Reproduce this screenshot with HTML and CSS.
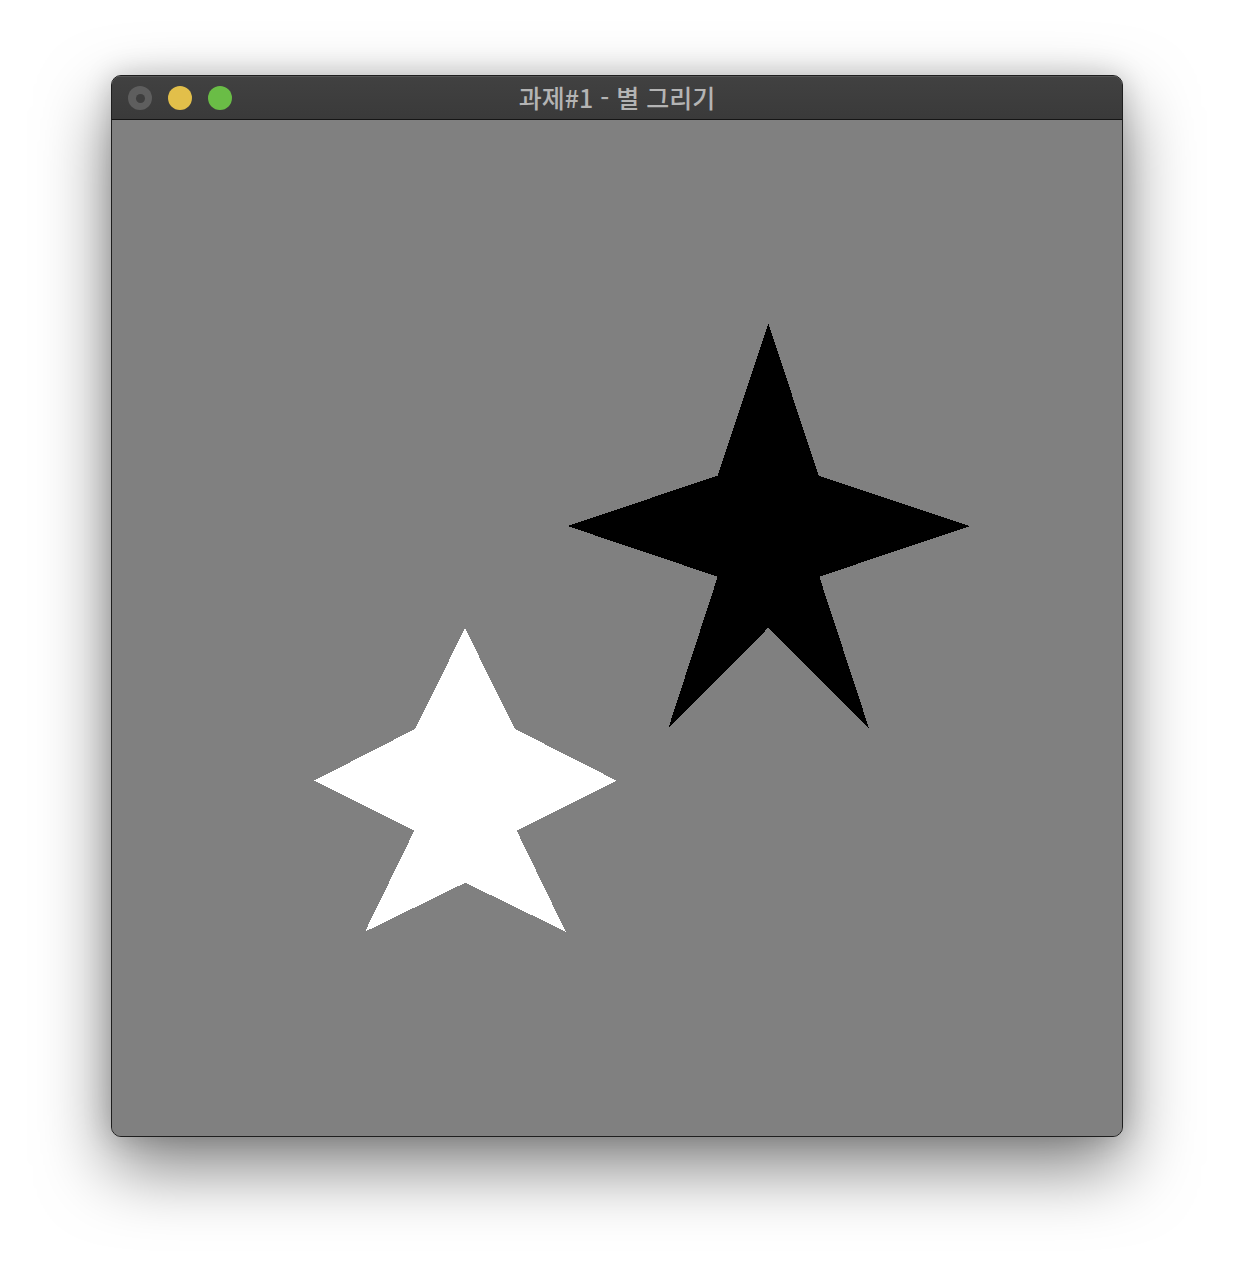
FILE: index.html
```html
<!DOCTYPE html>
<html lang="ko">
<head>
<meta charset="utf-8">
<title>과제#1 - 별 그리기</title>
<link rel="stylesheet" href="styles.css">
</head>
<body>
<div class="window">
  <div class="titlebar">
    <div class="lights">
      <span class="light close"><span class="dot"></span></span>
      <span class="light min"></span>
      <span class="light max"></span>
    </div>
    <div class="title">과제#1 - 별 그리기</div>
  </div>
  <div class="content">
    <svg class="canvas" width="1010" height="1016" viewBox="0 0 1010 1016" shape-rendering="crispEdges">
      <polygon fill="#000" points="656.3,203.3 706.7,355.7 858,406 707.3,456.7 757,608.3 656.3,507.7 556.3,608.3 605.7,456.7 455.3,406 605.7,355.7"/>
      <polygon fill="#fff" points="353,508.3 403,609 504.7,660.7 404.7,710.7 453.7,811.7 353.3,762.7 253,811.7 302.3,710.7 202,660.7 303,609"/>
    </svg>
  </div>
</div>
</body>
</html>
```

FILE: styles.css
```css
html, body {
  margin: 0;
  padding: 0;
  background: #ffffff;
}
body {
  width: 1234px;
  height: 1284px;
  overflow: hidden;
  font-family: "Noto Sans CJK KR", "Noto Sans", sans-serif;
}
.window {
  margin: 75px 0 0 111px;
  width: 1010px;
  border: 1px solid #1e1e1e;
  border-radius: 10px;
  overflow: hidden;
  display: flex;
  flex-direction: column;
  box-shadow: 0 30px 70px rgba(0,0,0,0.5), 0 0 28px rgba(0,0,0,0.18);
  background: #808080;
}
.titlebar {
  position: relative;
  height: 43px;
  background: linear-gradient(#414141, #3a3a3a);
  border-bottom: 1px solid #151515;
  box-shadow: inset 0 1px 0 #555;
  display: flex;
  align-items: center;
  justify-content: center;
}
.lights {
  position: absolute;
  left: 16px;
  top: 10px;
  display: flex;
  gap: 16px;
}
.light {
  width: 24px;
  height: 24px;
  border-radius: 50%;
  display: flex;
  align-items: center;
  justify-content: center;
}
.close { background: #5e5e5e; }
.close .dot {
  width: 9px;
  height: 9px;
  border-radius: 50%;
  background: #3e3e3e;
}
.min { background: #e2bf4a; }
.max { background: #6abd46; }
.title {
  color: #b4b4b4;
  font-size: 25px;
  font-weight: 500;
  line-height: 43px;
  margin-left: 0;
}
.content {
  height: 1016px;
  background: #808080;
}
.canvas {
  display: block;
}
```
